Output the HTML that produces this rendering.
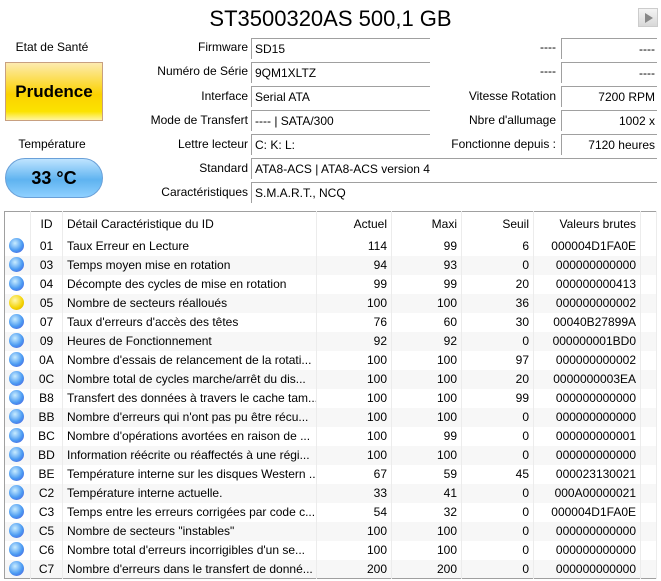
<!DOCTYPE html>
<html><head><meta charset="utf-8"><style>
*{margin:0;padding:0;box-sizing:border-box}
body{width:661px;height:581px;background:#fff;font-family:"Segoe UI","Liberation Sans",sans-serif;font-size:12px;color:#000;position:relative;overflow:hidden}
.a{position:absolute;white-space:nowrap}
.title{left:0;width:661px;top:4px;text-align:center;font-size:22px;line-height:30px}
.lbl{text-align:right;width:200px;left:48px}
.fld{left:251px;width:179px;height:21px;border-top:1px solid #a0a0a0;border-left:1px solid #a0a0a0;padding-left:3px;line-height:20px}
.fld.w{width:406px}
.rl{text-align:right;width:200px;left:356px}
.rf{left:561px;width:96px;height:21px;border-top:1px solid #a0a0a0;border-left:1px solid #a0a0a0;text-align:right;padding-right:2px;line-height:20px}
table{position:absolute;left:4px;top:211px;width:653px;border:1px solid #a0a0a0;border-collapse:collapse;table-layout:fixed}
td{height:19px;line-height:18px;padding:0 4px;white-space:nowrap;overflow:hidden;border-right:1px solid #ececec}
tr.h td{height:25px}
tr:nth-child(odd):not(.h) td{background:#f7f7f7}
.r{text-align:right}
.c{text-align:center}
.dot{display:inline-block;width:15px;height:15px;border-radius:50%;background:radial-gradient(circle at 40% 35%,#c8ecff,#4a9af2 55%,#5050d8);vertical-align:middle;margin-top:-2px}
.y{background:radial-gradient(circle at 40% 35%,#fff8b0,#f3d200 60%,#d0a000)}
</style></head><body>
<div class="a title">ST3500320AS 500,1 GB</div>
<div class="a" style="left:638px;top:8px;width:20px;height:19px;background:linear-gradient(#f4f4f4,#d8d8d8);border:1px solid #ccc"><div style="position:absolute;left:6px;top:4px;border-left:8px solid #888;border-top:5px solid transparent;border-bottom:5px solid transparent"></div></div>
<div class="a" style="left:0;width:104px;text-align:center;top:40px">Etat de Santé</div>
<div class="a" style="left:5px;top:62px;width:98px;height:59px;border:1px solid #c8a080;background:linear-gradient(#fdebb0,#fbd200 55%,#fbe300 85%,#fff5a0);text-align:center;line-height:57px;font-weight:bold;font-size:17px">Prudence</div>
<div class="a" style="left:0;width:104px;text-align:center;top:137px">Température</div>
<div class="a" style="left:5px;top:158px;width:98px;height:40px;border:1px solid #6aa0d8;border-radius:20px;background:linear-gradient(#bfe4ff,#5fb3f0 55%,#8fd0ff);text-align:center;line-height:38px;font-weight:bold;font-size:18px">33 °C</div>

<div class="a lbl" style="top:40px">Firmware</div><div class="a fld" style="top:38px">SD15</div>
<div class="a lbl" style="top:64px">Numéro de Série</div><div class="a fld" style="top:62px">9QM1XLTZ</div>
<div class="a lbl" style="top:89px">Interface</div><div class="a fld" style="top:86px">Serial ATA</div>
<div class="a lbl" style="top:113px">Mode de Transfert</div><div class="a fld" style="top:110px">---- | SATA/300</div>
<div class="a lbl" style="top:137px">Lettre lecteur</div><div class="a fld" style="top:134px">C: K: L:</div>
<div class="a lbl" style="top:161px">Standard</div><div class="a fld w" style="top:158px">ATA8-ACS | ATA8-ACS version 4</div>
<div class="a lbl" style="top:185px">Caractéristiques</div><div class="a fld w" style="top:182px">S.M.A.R.T., NCQ</div>

<div class="a rl" style="top:40px">----</div><div class="a rf" style="top:38px">----</div>
<div class="a rl" style="top:64px">----</div><div class="a rf" style="top:62px">----</div>
<div class="a rl" style="top:89px">Vitesse Rotation</div><div class="a rf" style="top:86px">7200 RPM</div>
<div class="a rl" style="top:113px">Nbre d'allumage</div><div class="a rf" style="top:110px">1002 x</div>
<div class="a rl" style="top:137px">Fonctionne depuis :</div><div class="a rf" style="top:134px">7120 heures</div>

<table>
<colgroup><col style="width:26px"><col style="width:32px"><col style="width:254px"><col style="width:75px"><col style="width:70px"><col style="width:72px"><col style="width:107px"><col></colgroup>
<tr class="h"><td></td><td class="c">ID</td><td>Détail Caractéristique du ID</td><td class="r">Actuel</td><td class="r">Maxi</td><td class="r">Seuil</td><td class="r">Valeurs brutes</td><td></td></tr>
<tr><td><span class="dot"></span></td><td class="c">01</td><td>Taux Erreur en Lecture</td><td class="r">114</td><td class="r">99</td><td class="r">6</td><td class="r">000004D1FA0E</td><td></td></tr>
<tr><td><span class="dot"></span></td><td class="c">03</td><td>Temps moyen mise en rotation</td><td class="r">94</td><td class="r">93</td><td class="r">0</td><td class="r">000000000000</td><td></td></tr>
<tr><td><span class="dot"></span></td><td class="c">04</td><td>Décompte des cycles de mise en rotation</td><td class="r">99</td><td class="r">99</td><td class="r">20</td><td class="r">000000000413</td><td></td></tr>
<tr><td><span class="dot y"></span></td><td class="c">05</td><td>Nombre de secteurs réalloués</td><td class="r">100</td><td class="r">100</td><td class="r">36</td><td class="r">000000000002</td><td></td></tr>
<tr><td><span class="dot"></span></td><td class="c">07</td><td>Taux d'erreurs d'accès des têtes</td><td class="r">76</td><td class="r">60</td><td class="r">30</td><td class="r">00040B27899A</td><td></td></tr>
<tr><td><span class="dot"></span></td><td class="c">09</td><td>Heures de Fonctionnement</td><td class="r">92</td><td class="r">92</td><td class="r">0</td><td class="r">000000001BD0</td><td></td></tr>
<tr><td><span class="dot"></span></td><td class="c">0A</td><td>Nombre d'essais de relancement de la rotati...</td><td class="r">100</td><td class="r">100</td><td class="r">97</td><td class="r">000000000002</td><td></td></tr>
<tr><td><span class="dot"></span></td><td class="c">0C</td><td>Nombre total de cycles marche/arrêt du dis...</td><td class="r">100</td><td class="r">100</td><td class="r">20</td><td class="r">0000000003EA</td><td></td></tr>
<tr><td><span class="dot"></span></td><td class="c">B8</td><td>Transfert des données à travers le cache tam...</td><td class="r">100</td><td class="r">100</td><td class="r">99</td><td class="r">000000000000</td><td></td></tr>
<tr><td><span class="dot"></span></td><td class="c">BB</td><td>Nombre d'erreurs qui n'ont pas pu être récu...</td><td class="r">100</td><td class="r">100</td><td class="r">0</td><td class="r">000000000000</td><td></td></tr>
<tr><td><span class="dot"></span></td><td class="c">BC</td><td>Nombre d'opérations avortées en raison de ...</td><td class="r">100</td><td class="r">99</td><td class="r">0</td><td class="r">000000000001</td><td></td></tr>
<tr><td><span class="dot"></span></td><td class="c">BD</td><td>Information réécrite ou réaffectés à une régi...</td><td class="r">100</td><td class="r">100</td><td class="r">0</td><td class="r">000000000000</td><td></td></tr>
<tr><td><span class="dot"></span></td><td class="c">BE</td><td>Température interne sur les disques Western ...</td><td class="r">67</td><td class="r">59</td><td class="r">45</td><td class="r">000023130021</td><td></td></tr>
<tr><td><span class="dot"></span></td><td class="c">C2</td><td>Température interne actuelle.</td><td class="r">33</td><td class="r">41</td><td class="r">0</td><td class="r">000A00000021</td><td></td></tr>
<tr><td><span class="dot"></span></td><td class="c">C3</td><td>Temps entre les erreurs corrigées par code c...</td><td class="r">54</td><td class="r">32</td><td class="r">0</td><td class="r">000004D1FA0E</td><td></td></tr>
<tr><td><span class="dot"></span></td><td class="c">C5</td><td>Nombre de secteurs "instables"</td><td class="r">100</td><td class="r">100</td><td class="r">0</td><td class="r">000000000000</td><td></td></tr>
<tr><td><span class="dot"></span></td><td class="c">C6</td><td>Nombre total d'erreurs incorrigibles d'un se...</td><td class="r">100</td><td class="r">100</td><td class="r">0</td><td class="r">000000000000</td><td></td></tr>
<tr><td><span class="dot"></span></td><td class="c">C7</td><td>Nombre d'erreurs dans le transfert de donné...</td><td class="r">200</td><td class="r">200</td><td class="r">0</td><td class="r">000000000000</td><td></td></tr>
</table>
</body></html>
